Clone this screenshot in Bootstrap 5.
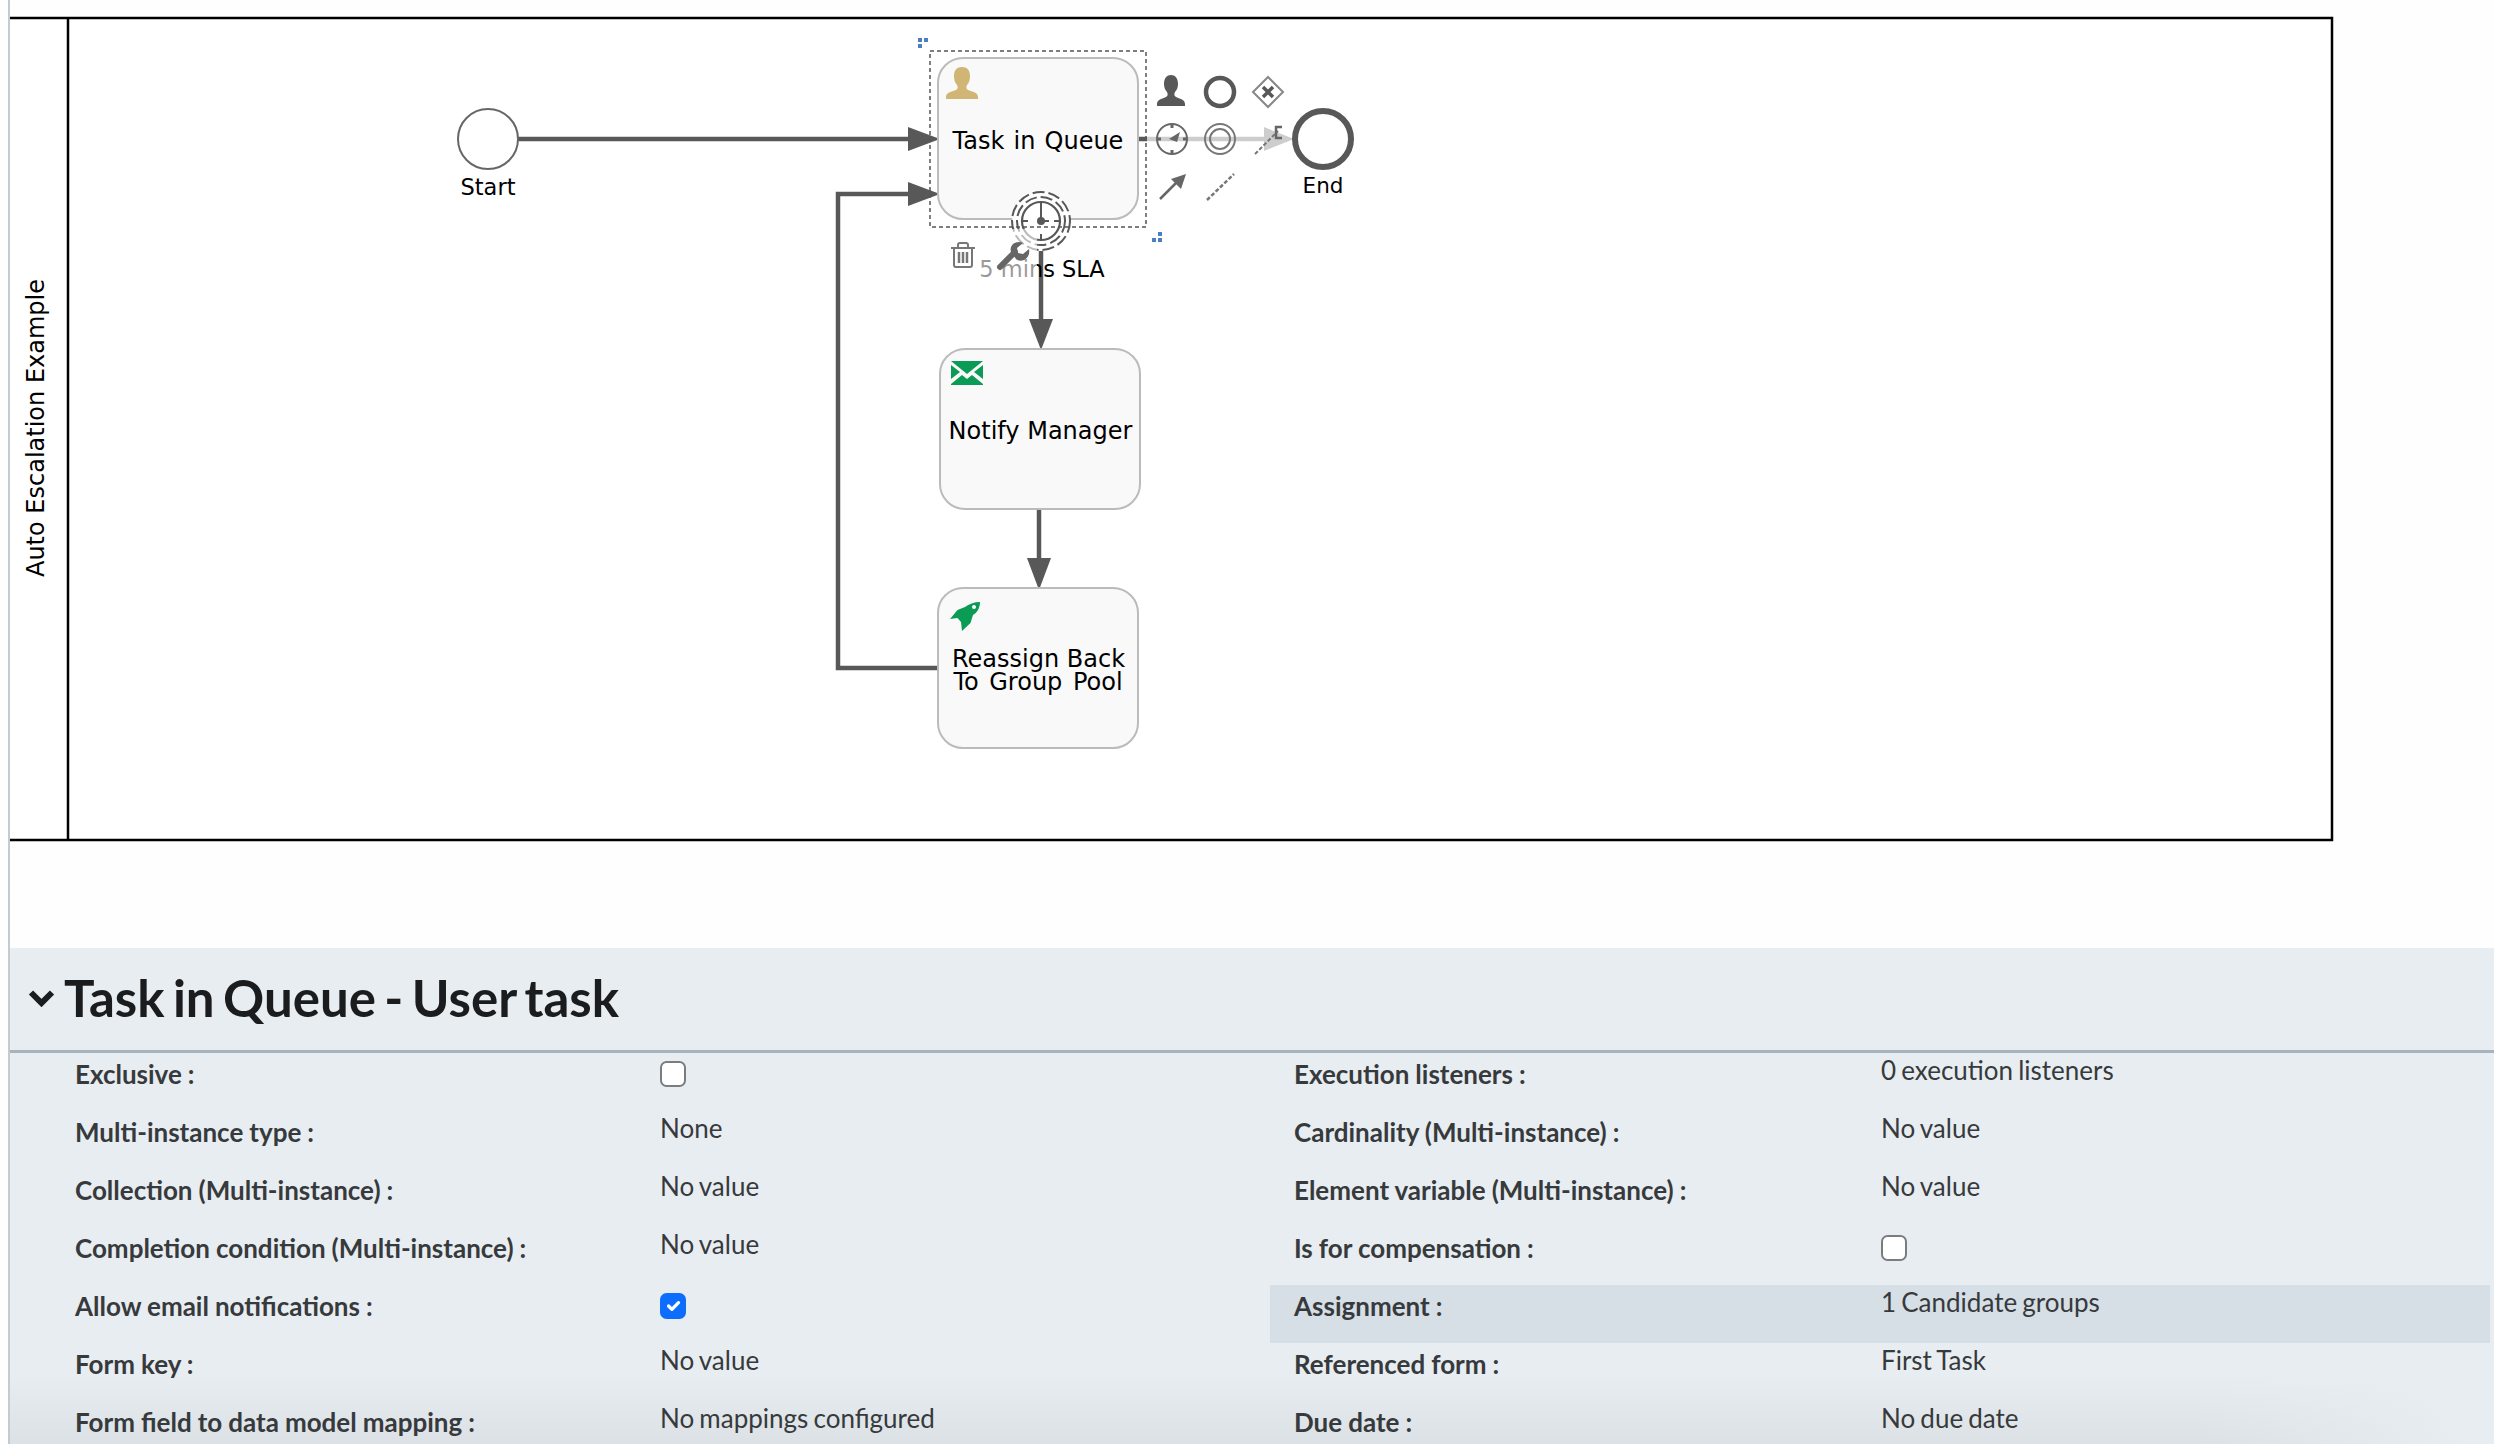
<!DOCTYPE html>
<html lang="en">
<head>
    <meta charset="UTF-8">
    <meta name="viewport" content="width=device-width, initial-scale=1.0">
    <title>Task in Queue - User task</title>
    <link href="https://cdn.jsdelivr.net/npm/bootstrap@5.3.2/dist/css/bootstrap.min.css" rel="stylesheet">
    <style>
        html, body {
            height: 100%;
            overflow: hidden;
            background: #fefefe;
        }
        .app-shell {
            margin-left: 8px;
            height: 1444px;
            border-left: 2px solid #c5cace;
            overflow: hidden;
            font-family: Lato, sans-serif;
            color: #373a3c;
        }
        .diagram-area {
            height: 948px;
        }
        .diagram-area svg {
            display: block;
        }
        .diagram-area text {
            font-family: "DejaVu Sans", sans-serif;
            fill: #000;
        }
        .prop-panel {
            height: 496px;
            background:
                linear-gradient(to right, rgba(232,237,241,0) 88%, #e8edf1 99%),
                linear-gradient(#e8edf1 calc(100% - 70px), #dcE1e5 100%);
        }
        .prop-header {
            height: 105px;
            padding-left: 18px;
            padding-bottom: 2px;
            border-bottom: 3px solid #a8b3c0;
            gap: 9px;
        }
        .prop-title {
            margin: 0;
            font-family: Lato, sans-serif;
            font-weight: 700;
            font-size: 51px;
            word-spacing: -4px;
            color: #1a1c1e;
        }
        .prop-list-left {
            width: 1260px;
            padding-left: 65px;
        }
        .prop-list-left .prop-label {
            width: 585px;
        }
        .prop-list-right {
            padding-left: 24px;
        }
        .prop-row {
            height: 58px;
            font-size: 26px;
        }
        .prop-row-active {
            background: #d6dee6;
            margin-right: 4px;
        }
        .prop-label {
            width: 587px;
            flex: none;
            padding-top: 2px;
            font-weight: 700;
            word-spacing: -.3px;
        }
        .prop-value {
            margin-top: -2px;
            word-spacing: -1.5px;
        }
        .prop-check {
            width: 26px;
            height: 26px;
            margin: 8px 0 0;
            border: 2px solid #7a7d80;
            border-radius: 5px;
            opacity: 1 !important;
        }
        .prop-check:checked {
            background-color: #0d6efd;
            border-color: #0d6efd;
        }
    </style>
</head>
<body>
    <div class="app-shell">
        <div class="diagram-area">
            <svg width="2484" height="948" viewBox="10 0 2484 948" xmlns="http://www.w3.org/2000/svg">
                <!-- pool -->
                <path d="M10 18H2332V840H10" fill="#fff" stroke="#000" stroke-width="2.5"/>
                <line x1="68" y1="18" x2="68" y2="840" stroke="#000" stroke-width="2.5"/>
                <text transform="translate(44 428) rotate(-90)" text-anchor="middle" font-size="24">Auto Escalation Example</text>

                <!-- flows -->
                <g fill="none" stroke="#585858" stroke-width="4.5">
                    <path d="M518 139H912"/>
                    <path d="M938 668H838V194H912"/>
                    <path d="M1039 509V562"/>
                    <path d="M1041 251V325"/>
                    <path d="M1138 139H1270"/>
                </g>
                <g fill="#585858">
                    <path d="M908 127L940 139L908 151Z"/>
                    <path d="M908 182L940 194L908 206Z"/>
                    <path d="M1027 558L1039 590L1051 558Z"/>
                    <path d="M1029 319L1041 350L1053 319Z"/>
                    <path d="M1264 127L1294 139L1264 151Z"/>
                </g>

                <!-- start -->
                <circle cx="488" cy="139" r="30" fill="#fff" stroke="#666" stroke-width="2"/>
                <text x="488" y="195" text-anchor="middle" font-size="22.5">Start</text>

                <!-- task in queue -->
                <rect x="938" y="58" width="200" height="161" rx="25" fill="#f9f9f9" stroke="#bbb" stroke-width="2"/>
                <path d="M946 99v-2c0-4 4-5 10-7 2-1 2-3 1-5-2-2-3-5-3-9 0-6 3-9 8-9s8 3 8 9c0 4-1 7-3 9-1 2-1 4 1 5 6 2 10 3 10 7v2z" fill="#d1b574"/>
                <text x="1038" y="148.5" text-anchor="middle" font-size="24" word-spacing="1.5">Task in Queue</text>

                <!-- notify manager -->
                <rect x="940" y="349" width="200" height="160" rx="25" fill="#f9f9f9" stroke="#bbb" stroke-width="2"/>
                <path d="M951 361h32l-16 13z" fill="#0a9b55"/>
                <path d="M951 365v14l9-7zM983 365v14l-9-7zM951 385h32v-1l-11-9-5 4-5-4-11 9z" fill="#0a9b55"/>
                <text x="1040.500" y="439" text-anchor="middle" font-size="24">Notify Manager</text>

                <!-- reassign -->
                <rect x="938" y="588" width="200" height="160" rx="25" fill="#f9f9f9" stroke="#bbb" stroke-width="2"/>
                <path d="M980 602C974 602 969 604 965 607L957.5 610L950 619L957.5 618L961 622L962 631L970.5 623L973 615C977 613 980 608 980 602Z" fill="#0a9b55"/>
                <circle cx="974" cy="607" r="2" fill="#fff"/>
                <text x="1038.500" y="666.500" text-anchor="middle" font-size="24">Reassign Back</text>
                <text x="1038" y="690" text-anchor="middle" font-size="24" word-spacing="3">To Group Pool</text>

                <!-- boundary timer -->
                <text x="1042" y="277" text-anchor="middle" font-size="22.5">5 mins SLA</text>
                <circle cx="1041" cy="221" r="29" fill="#fff" stroke="#585858" stroke-width="2" stroke-dasharray="12 4"/>
                <circle cx="1041" cy="221" r="24" fill="none" stroke="#585858" stroke-width="2" stroke-dasharray="12 4"/>
                <circle cx="1041" cy="221" r="19" fill="#fff" stroke="#585858" stroke-width="2.2"/>
                <g stroke="#585858" stroke-width="2">
                    <path d="M1041 202v6M1041 234v6M1022 221h6M1054 221h6M1041 221v-15M1041 221h8"/>
                </g>
                <circle cx="1041" cy="221" r="4" fill="#585858"/>

                <!-- selection -->
                <rect x="930" y="51" width="216" height="176" fill="none" stroke="#555" stroke-width="1.5" stroke-dasharray="4 3"/>
                <g fill="#4a7fc1">
                    <rect x="918" y="38" width="4" height="4"/><rect x="924" y="38" width="4" height="4"/><rect x="918" y="44" width="4" height="4"/>
                    <rect x="1158" y="232" width="4" height="4"/><rect x="1152" y="238" width="4" height="4"/><rect x="1158" y="238" width="4" height="4"/>
                </g>

                <!-- palette overlay -->
                <rect x="1147" y="65" width="146" height="150" fill="#fff" fill-opacity=".7"/>
                <rect x="945" y="229" width="92" height="60" fill="#fff" fill-opacity=".6"/>

                <!-- end -->
                <circle cx="1323" cy="139" r="28" fill="#fff" stroke="#585858" stroke-width="6"/>
                <text x="1323" y="193" text-anchor="middle" font-size="21.5">End</text>

                <!-- palette icons -->
                <path d="M1158 106v-2c0-4 4-5 9-7 2-1 2-3 1-5-2-2-3-5-3-8 0-6 3-9 7-9s7 3 7 9c0 3-1 6-3 8-1 2-1 4 1 5 5 2 9 3 9 7v2z" transform="translate(-1 0)" fill="#585858"/>
                <circle cx="1220" cy="92" r="14" fill="none" stroke="#585858" stroke-width="4.5"/>
                <path d="M1268 77L1283 92L1268 107L1253 92Z" fill="#fff" stroke="#888" stroke-width="2"/>
                <path d="M1263 87l10 10M1273 87l-10 10" stroke="#585858" stroke-width="3.5"/>
                <circle cx="1172" cy="139" r="15" fill="none" stroke="#666" stroke-width="2"/>
                <path d="M1172 124v4M1172 150v4M1157 139h4M1183 139h4" stroke="#666" stroke-width="3"/>
                <path d="M1180 132l-11 7 8 3z" fill="#666"/>
                <circle cx="1220" cy="139" r="15" fill="none" stroke="#777" stroke-width="2"/>
                <circle cx="1220" cy="139" r="10" fill="none" stroke="#777" stroke-width="2"/>
                <path d="M1255 154L1278 131" stroke="#777" stroke-width="2" stroke-dasharray="4 2"/>
                <path d="M1282 127h-6v11h6" fill="none" stroke="#666" stroke-width="2.5"/>
                <path d="M1160 199L1178 181" stroke="#666" stroke-width="2.5"/>
                <path d="M1186 174l-5 15-10-10z" fill="#666"/>
                <path d="M1207 200L1234 174" stroke="#777" stroke-width="2.5" stroke-dasharray="4 2"/>
                <g fill="none" stroke="#777" stroke-width="2">
                    <path d="M951 248h24M958 248v-3q0-2 2-2h6q2 0 2 2v3"/>
                    <path d="M954 248v17q0 2 2 2h14q2 0 2-2v-17"/>
                    <path d="M959 252v11M963 252v11M967 252v11" stroke-width="2.5"/>
                </g>
                <path d="M1000 267L1015 252" stroke="#666" stroke-width="6" stroke-linecap="round"/>
                <path d="M1023 243l-6 5 1 5 5 1 6-5c1 5-1 9-5 11-3 1-6 1-8-1l-5-7c-1-3 0-6 2-8 3-2 7-3 10-1z" fill="#666"/>
            </svg>
        </div>

        <section class="prop-panel">
            <div class="prop-header d-flex align-items-center">
                <svg width="27" height="18" viewBox="0 0 27 18" xmlns="http://www.w3.org/2000/svg">
                    <path d="M3 3.5L13.5 14L24 3.5" fill="none" stroke="#1a1c1e" stroke-width="6"/>
                </svg>
                <h2 class="prop-title">Task in Queue - User task</h2>
            </div>
            <div class="row g-0">
                <div class="col-auto prop-list-left">
                    <div class="prop-row d-flex align-items-start"><div class="prop-label">Exclusive :</div><input class="form-check-input prop-check" type="checkbox" disabled></div>
                    <div class="prop-row d-flex align-items-start"><div class="prop-label">Multi-instance type :</div><div class="prop-value">None</div></div>
                    <div class="prop-row d-flex align-items-start"><div class="prop-label">Collection (Multi-instance) :</div><div class="prop-value">No value</div></div>
                    <div class="prop-row d-flex align-items-start"><div class="prop-label">Completion condition (Multi-instance) :</div><div class="prop-value">No value</div></div>
                    <div class="prop-row d-flex align-items-start"><div class="prop-label">Allow email notifications :</div><input class="form-check-input prop-check" type="checkbox" checked disabled></div>
                    <div class="prop-row d-flex align-items-start"><div class="prop-label">Form key :</div><div class="prop-value">No value</div></div>
                    <div class="prop-row d-flex align-items-start"><div class="prop-label">Form field to data model mapping :</div><div class="prop-value">No mappings configured</div></div>
                </div>
                <div class="col">
                    <div class="prop-row prop-list-right d-flex align-items-start"><div class="prop-label">Execution listeners :</div><div class="prop-value">0 execution listeners</div></div>
                    <div class="prop-row prop-list-right d-flex align-items-start"><div class="prop-label">Cardinality (Multi-instance) :</div><div class="prop-value">No value</div></div>
                    <div class="prop-row prop-list-right d-flex align-items-start"><div class="prop-label">Element variable (Multi-instance) :</div><div class="prop-value">No value</div></div>
                    <div class="prop-row prop-list-right d-flex align-items-start"><div class="prop-label">Is for compensation :</div><input class="form-check-input prop-check" type="checkbox" disabled></div>
                    <div class="prop-row prop-row-active prop-list-right d-flex align-items-start"><div class="prop-label">Assignment :</div><div class="prop-value">1 Candidate groups</div></div>
                    <div class="prop-row prop-list-right d-flex align-items-start"><div class="prop-label">Referenced form :</div><div class="prop-value">First Task</div></div>
                    <div class="prop-row prop-list-right d-flex align-items-start"><div class="prop-label">Due date :</div><div class="prop-value">No due date</div></div>
                </div>
            </div>
        </section>
    </div>

    <script src="https://cdn.jsdelivr.net/npm/bootstrap@5.3.2/dist/js/bootstrap.bundle.min.js"></script>
</body>
</html>
